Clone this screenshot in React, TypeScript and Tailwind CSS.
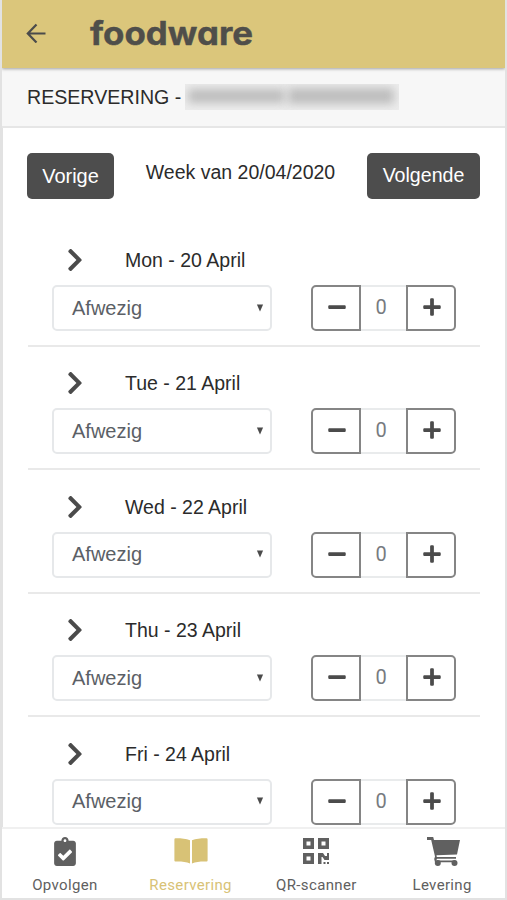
import React, { useState } from 'react';
import { FaChevronRight, FaMinus, FaPlus } from 'react-icons/fa';

const DAYS = ['Mon - 20 April', 'Tue - 21 April', 'Wed - 22 April', 'Thu - 23 April', 'Fri - 24 April'];

function Logo() {
  return (
    <svg width="170" height="40" viewBox="0 0 170 40" className="ml-[40px] mt-[11px] overflow-visible">
      <text
        x="4"
        y="33.5"
        textLength="163"
        lengthAdjust="spacingAndGlyphs"
        className="fill-[#4f4e4a] stroke-[#4f4e4a] font-['Inter',sans-serif] text-[32px] font-bold [font-feature-settings:'cv11','ss03']"
        strokeWidth="0.4"
        strokeLinejoin="round"
      >
        foodware
      </text>
    </svg>
  );
}

function ClipboardIcon() {
  return (
    <svg width="22" height="29" viewBox="0 0 384 512" fill="currentColor">
      <path d="M336 64h-80c0-35.300-28.700-64-64-64s-64 28.700-64 64H48C21.500 64 0 85.500 0 112v352c0 26.500 21.500 48 48 48h288c26.500 0 48-21.500 48-48V112c0-26.500-21.500-48-48-48zM192 40c13.300 0 24 10.700 24 24s-10.700 24-24 24-24-10.700-24-24 10.700-24 24-24zm121.200 231.800l-143 141.800c-4.700 4.700-12.300 4.600-17-.1l-82.600-83.300c-4.700-4.700-4.600-12.300.1-17L99.100 285c4.700-4.700 12.300-4.600 17 .1l46 46.400 106-105.200c4.700-4.700 12.300-4.600 17 .1l28.200 28.400c4.700 4.800 4.600 12.300-.1 17z" />
    </svg>
  );
}

function BookIcon() {
  return (
    <svg width="34" height="26" viewBox="0 0 34 26" fill="currentColor">
      <path d="M1.500.3C6.500.2 12 .8 16 2.300V25.400C12 23.800 6.500 23.400 1.500 23.600Q.4 23.700.4 22.500V1.500Q.4.400 1.500.3zM32.500.3C27.500.2 22 .8 18 2.300V25.400C22 23.800 27.500 23.400 32.500 23.600Q33.600 23.700 33.600 22.500V1.500Q33.600.400 32.500.3z" />
    </svg>
  );
}

function QrIcon() {
  return (
    <svg width="26" height="26" viewBox="0 0 26 26" fill="currentColor">
      <path fillRule="evenodd" d="M0 0h11v11H0zM3.500 3.500v4h4v-4zM15 0h11v11H15zM18.500 3.500v4h4v-4zM0 15h11v11H0zM3.500 18.500v4h4v-4z" />
      <path d="M15 15h5l2 3h2v-3h2v7h-4.500l-2-3H18.500v7H15zM20.500 24h2v2h-2zM24 24h2v2h-2z" />
    </svg>
  );
}

function CartIcon() {
  return (
    <svg width="33" height="29" viewBox="0 0 33 29" fill="currentColor" className="ml-[2px]">
      <path d="M0 0h6.200l.8 3H33L30 17.500L9.500 18.200L9.800 20H29v1.800H10.200L9 23.500H28.500v1.800H8L7.200 22L8 19.500L4.200 3H0z" />
      <circle cx="10.800" cy="26" r="3" />
      <circle cx="27.500" cy="26" r="3" />
    </svg>
  );
}

function DayRow({ label }: { label: string }) {
  const [count, setCount] = useState(0);

  return (
    <div className="h-[123.4px] px-[24px] pt-[23px]">
      <div className="flex h-[39px] items-start">
        <FaChevronRight className="ml-[11px] mt-px h-[26px] w-[24px] text-[#4b4b4b]" />
        <span className="ml-[38px] text-[19.500px] leading-[29px]">{label}</span>
      </div>
      <div className="flex">
        <button className="flex h-[46px] w-[221px] items-center justify-between rounded-[5px] border-2 border-[#e6e8ea] pb-px pl-[18px] pr-[6px] text-[#5b6066]">
          <span>Afwezig</span>
          <svg width="8" height="8" viewBox="0 0 9 8" className="fill-[#4b4b4b]">
            <path d="M1 0h7L4.500 8z" />
          </svg>
        </button>
        <div className="ml-[39px] flex h-[46px] w-[145px] text-[#4b4b4b]">
          <button onClick={() => setCount(Math.max(0, count - 1))} className="flex w-[50px] items-center justify-center rounded-l-[5px] border-2 border-[#858585] pb-[2px] pl-[2px]">
            <FaMinus size={20} />
          </button>
          <span className="flex flex-1 items-center justify-center border-y-2 border-[#e9ebec] pb-[2px] pr-[5px] font-['Roboto',sans-serif] text-[20px] text-[#777b80]">{count}</span>
          <button onClick={() => setCount(count + 1)} className="flex w-[50px] items-center justify-center rounded-r-[5px] border-2 border-[#858585] pb-[2px] pl-[2px]">
            <FaPlus size={20} />
          </button>
        </div>
      </div>
      <hr className="-mx-[24px] mt-[14px] border-t-2 border-[#e9e9e9]" />
    </div>
  );
}

export default function App() {
  const tabs = [
    { name: 'Opvolgen', icon: <ClipboardIcon /> },
    { name: 'Reservering', icon: <BookIcon /> },
    { name: 'QR-scanner', icon: <QrIcon /> },
    { name: 'Levering', icon: <CartIcon /> },
  ];

  return (
    <div className="flex h-[900px] w-[507px] flex-col overflow-hidden border-x-2 border-b-2 border-[#e2e2e2] bg-white font-['Liberation_Sans',Arial,sans-serif] text-[20px] text-[#2b2b2b]">
      <header className="z-10 flex h-[68px] shrink-0 bg-[#dbc67b] shadow-[0_1px_3px_rgba(0,0,0,0.35)]">
        <svg width="20" height="20" viewBox="0 0 20 20" className="ml-[24px] mt-[23px] fill-none stroke-[#4b4b4b]" strokeWidth="2.200">
          <path d="M19.500 10.500H2M10.500 1.500L1.800 10.500L10.500 19.500" />
        </svg>
        <Logo />
      </header>

      <div className="flex h-[60px] shrink-0 items-center border-b-2 border-[#e6e6e6] bg-[#f7f7f7] pl-[25px]">
        <span className="mt-[2px] text-[19.600px]">RESERVERING -</span>
        {/* guest name is masked */}
        <div className="ml-[4px] flex h-[26px] w-[214px] items-center overflow-hidden bg-[#ededed]">
          <div className="mb-[3px] ml-[3px] h-[14px] w-[97px] bg-[#bdbdbd] blur-[5px]" />
          <div className="mb-[3px] ml-[3px] h-[16px] w-[106px] bg-[#bdbdbd] blur-[5px]" />
        </div>
      </div>

      <main className="min-h-0 flex-1 overflow-hidden border-l border-[#e2e2e2] px-[25px] pt-[25px]">
        <div className="-ml-px flex h-[70px] items-start justify-between">
          <button className="h-[46px] w-[87px] rounded-[5px] bg-[#4d4d4d] pb-px text-white">Vorige</button>
          <span className="mt-[4px] text-[19.500px] leading-[30px]">Week van 20/04/2020</span>
          <button className="h-[46px] w-[113px] rounded-[5px] bg-[#4d4d4d] pb-px text-[19.600px] text-white">Volgende</button>
        </div>
        {DAYS.map((day) => (
          <DayRow key={day} label={day} />
        ))}
      </main>

      <nav className="flex h-[71px] shrink-0 border-t-2 border-[#f0f0f0] bg-white font-['Roboto',sans-serif] text-[#606060]">
        {tabs.map((tab) => (
          <button key={tab.name} className={`flex flex-1 flex-col items-center ${tab.name === 'Reservering' ? 'text-[#d8c276]' : ''}`}>
            <span className="mt-[6px] flex h-[32px] items-center">{tab.icon}</span>
            <span className="mt-[8px] text-[15px] leading-[20px] tracking-[0.35px]">{tab.name}</span>
          </button>
        ))}
      </nav>
    </div>
  );
}
